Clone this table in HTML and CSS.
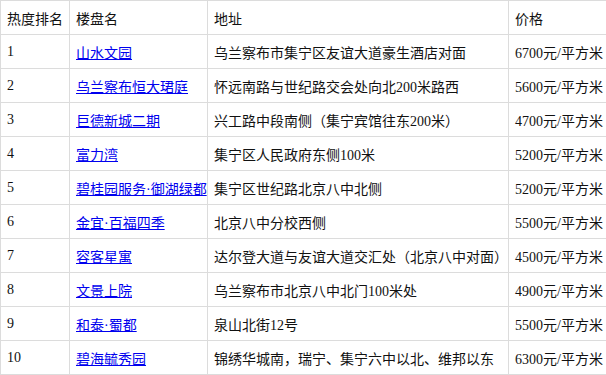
FILE: index.html
```html
<!DOCTYPE html>
<html lang="zh">
<head>
<meta charset="utf-8">
<title>热度排名</title>
<link rel="stylesheet" href="styles.css">
</head>
<body>
<table class="rank">
  <colgroup>
    <col class="c-rank">
    <col class="c-name">
    <col class="c-addr">
    <col class="c-price">
  </colgroup>
  <thead>
    <tr><th>热度排名</th><th>楼盘名</th><th>地址</th><th>价格</th></tr>
  </thead>
  <tbody>
    <tr><td>1</td><td><a href="#">山水文园</a></td><td>乌兰察布市集宁区友谊大道豪生酒店对面</td><td>6700元/平方米</td></tr>
    <tr><td>2</td><td><a href="#">乌兰察布恒大珺庭</a></td><td>怀远南路与世纪路交会处向北200米路西</td><td>5600元/平方米</td></tr>
    <tr><td>3</td><td><a href="#">巨德新城二期</a></td><td>兴工路中段南侧（集宁宾馆往东200米）</td><td>4700元/平方米</td></tr>
    <tr><td>4</td><td><a href="#">富力湾</a></td><td>集宁区人民政府东侧100米</td><td>5200元/平方米</td></tr>
    <tr><td>5</td><td><a href="#">碧桂园服务·御湖绿都</a></td><td>集宁区世纪路北京八中北侧</td><td>5200元/平方米</td></tr>
    <tr><td>6</td><td><a href="#">金宜·百福四季</a></td><td>北京八中分校西侧</td><td>5500元/平方米</td></tr>
    <tr><td>7</td><td><a href="#">容客星寓</a></td><td>达尔登大道与友谊大道交汇处（北京八中对面）</td><td>4500元/平方米</td></tr>
    <tr><td>8</td><td><a href="#">文景上院</a></td><td>乌兰察布市北京八中北门100米处</td><td>4900元/平方米</td></tr>
    <tr><td>9</td><td><a href="#">和泰·蜀都</a></td><td>泉山北街12号</td><td>5500元/平方米</td></tr>
    <tr><td>10</td><td><a href="#">碧海毓秀园</a></td><td>锦绣华城南，瑞宁、集宁六中以北、维邦以东</td><td>6300元/平方米</td></tr>
  </tbody>
</table>
</body>
</html>
```
FILE: styles.css
```css
html, body {
  margin: 0;
  padding: 0;
  background: #fff;
}
.rank {
  width: 606px;
  table-layout: fixed;
  border-collapse: collapse;
  font-family: "Liberation Serif", "Noto Sans CJK SC", serif;
  font-size: 14px;
  color: #111;
}
.c-rank { width: 69px; }
.c-name { width: 138px; }
.c-addr { width: 301px; }
.c-price { width: 98px; }
.rank th,
.rank td {
  border: 1px solid #dcdcdc;
  height: 33px;
  padding: 0 0 0 6px;
  text-align: left;
  font-weight: normal;
  white-space: nowrap;
  overflow: hidden;
  vertical-align: middle;
}
.rank a {
  color: #0000ee;
  text-decoration: underline;
}
```
